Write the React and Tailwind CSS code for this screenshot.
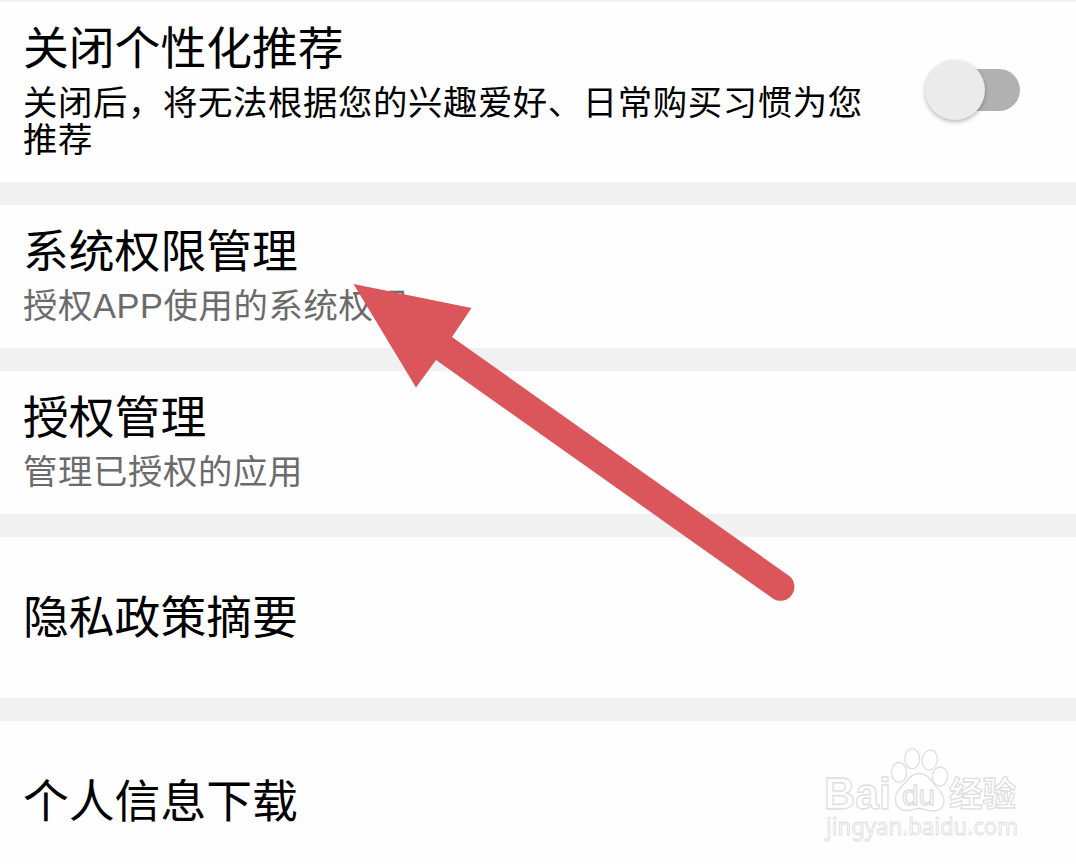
import React from 'react';

const Divider = () => <div className="h-[23px] shrink-0 bg-[#f1f1f1]" />;

const Title = ({ children }) => (
  <h2 className="text-[45.8px] leading-[55px] text-black whitespace-nowrap">{children}</h2>
);

const Hint = ({ children }) => (
  <p className="mt-2 text-[34.4px] leading-[37px] tracking-[0.6px] text-[#6b6b6b] whitespace-nowrap">{children}</p>
);

const Toggle = () => {
  const [on, setOn] = React.useState(false);

  return (
    <button
      type="button"
      role="switch"
      aria-checked={on}
      aria-label="关闭个性化推荐"
      onClick={() => setOn(!on)}
      className={`flex h-[60px] w-[95px] items-center ${on ? 'flex-row-reverse' : ''}`}
    >
      <span className="z-10 size-[60px] shrink-0 rounded-full bg-[#ebebeb] shadow-[0_2px_4px_rgba(0,0,0,0.28)]" />
      <span className="-mx-5 h-[42px] w-[55px] shrink-0 rounded-r-full bg-[#b1b1b1]" />
    </button>
  );
};

const Arrow = () => (
  <svg className="pointer-events-none absolute left-0 top-0" width="1076" height="864" viewBox="0 0 1076 864">
    <path
      d="M353.500 284L471.500 308L452 337L789.300 576A14 14 0 0 1 773.500 599L436 360L416 387.500Z"
      fill="#db565b"
    />
  </svg>
);

const Watermark = () => (
  <svg
    className="pointer-events-none absolute left-[820px] top-[740px]"
    width="210"
    height="110"
    viewBox="0 0 210 110"
    fill="#fff"
    stroke="#dedede"
    strokeWidth="1.300"
  >
    <text
      x="4"
      y="69"
      fontSize="44"
      fontWeight="bold"
      textLength="67"
      lengthAdjust="spacingAndGlyphs"
      fontFamily="Liberation Sans, Arial, sans-serif"
    >
      Bai
    </text>
    <ellipse cx="79" cy="32.500" rx="7.500" ry="10" />
    <ellipse cx="92.300" cy="18.700" rx="7.300" ry="10" />
    <ellipse cx="109.700" cy="20" rx="7.500" ry="10" transform="rotate(10 109.700 20)" />
    <ellipse cx="120" cy="36.500" rx="7.700" ry="9.500" transform="rotate(8 120 36.500)" />
    <path d="M99 33.500C91 33.500 88 40 84 44C79 49 75 53 75.500 60C76 68 81 70.500 87 70.500C92 70.500 95 68.500 99 68.500C104 68.500 107 71 113 71C119 71 124 68 124 60C124 53 118 49 114 44C110 39 107 33.500 99 33.500Z" />
    <text
      x="82"
      y="64.500"
      fontSize="28"
      textLength="33"
      lengthAdjust="spacingAndGlyphs"
      fontFamily="Liberation Sans, Arial, sans-serif"
    >
      du
    </text>
    <text
      x="129"
      y="66"
      fontSize="34"
      fontWeight="bold"
      textLength="67"
      lengthAdjust="spacingAndGlyphs"
      fontFamily="Noto Sans CJK SC, sans-serif"
    >
      经验
    </text>
    <text
      x="6"
      y="94.500"
      fontSize="23"
      strokeWidth="0.900"
      textLength="192"
      lengthAdjust="spacingAndGlyphs"
      fontFamily="Noto Sans, sans-serif"
    >
      jingyan.baidu.com
    </text>
  </svg>
);

export default function App() {
  return (
    <main
      lang="zh-CN"
      className="relative flex h-[864px] w-[1076px] flex-col overflow-hidden bg-[#fefefe] font-['Liberation_Sans','Noto_Sans_CJK_SC',sans-serif]"
    >
      <div className="h-0.5 shrink-0 bg-[#f1f1f1]" />

      <section className="flex h-[180px] shrink-0 justify-between pl-[23px] pr-14 pt-5">
        <div>
          <Title>关闭个性化推荐</Title>
          <p className="mt-2 text-[34.4px] leading-[37px] tracking-[0.6px] text-black whitespace-nowrap">
            关闭后，将无法根据您的兴趣爱好、日常购买习惯为您
            <br />
            推荐
          </p>
        </div>
        <div className="pt-[38px]">
          <Toggle />
        </div>
      </section>
      <Divider />

      <section className="h-[143px] shrink-0 pl-[23px] pt-5">
        <Title>系统权限管理</Title>
        <Hint>授权APP使用的系统权限</Hint>
      </section>
      <Divider />

      <section className="h-[143px] shrink-0 pl-[23px] pt-5">
        <Title>授权管理</Title>
        <Hint>管理已授权的应用</Hint>
      </section>
      <Divider />

      <section className="flex h-[161px] shrink-0 items-center pl-[23px] pt-px">
        <Title>隐私政策摘要</Title>
      </section>
      <Divider />

      <section className="flex h-[161px] shrink-0 items-center pl-[23px] pt-px">
        <Title>个人信息下载</Title>
      </section>

      <Arrow />
      <Watermark />
    </main>
  );
}
